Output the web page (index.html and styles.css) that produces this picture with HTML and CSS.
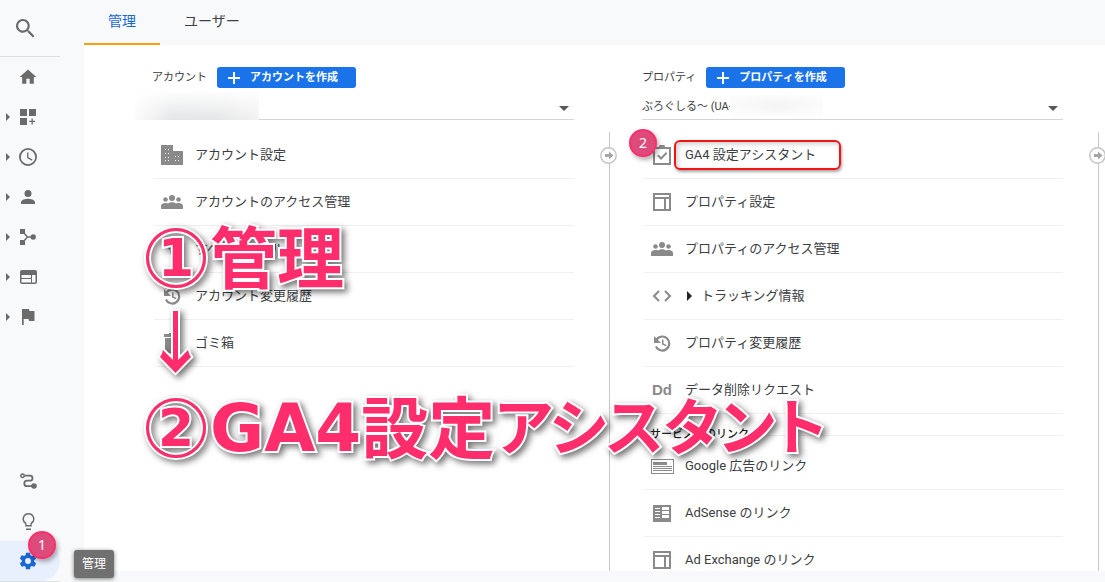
FILE: index.html
```html
<!DOCTYPE html>
<html lang="ja">
<head>
<meta charset="utf-8">
<meta name="viewport" content="width=device-width, initial-scale=1">
<title>管理</title>
<link rel="stylesheet" href="styles.css">
</head>
<body>
<svg class="sprite" aria-hidden="true">
  <symbol id="i-people" viewBox="0 0 22 14"><circle cx="11" cy="3" r="3"/><circle cx="4.500" cy="4.500" r="2.300"/><circle cx="17.500" cy="4.500" r="2.300"/><path d="M0 14v-3c0-2 2-3 4.500-3 1 0 1.800.1 2.500.4C8.200 7.500 9.500 7.200 11 7.200s2.800.3 4 1.200c.7-.3 1.500-.4 2.500-.4 2.500 0 4.500 1 4.500 3v3z"/></symbol>
  <symbol id="i-history" viewBox="0 0 18 17"><path d="M3.500 4.500a7 7 0 1 1-.6 7" fill="none" stroke="#8a8a8a" stroke-width="2.200"/><path d="M1 1v7h7zM9 4.500h1.500v4l3 1.500-.7 1.300L9 9.500z"/></symbol>
  <symbol id="i-layout" viewBox="0 0 18 18"><path fill-rule="evenodd" d="M0 0h18v18H0zM2 2v2h14V2zM2 6v10h9V6zM13 6v10h3V6z"/></symbol>
  <symbol id="i-move" viewBox="0 0 17 17"><circle cx="8.500" cy="8.500" r="7.700" fill="#fff" stroke="#c4c4c4" stroke-width="1.400"/><path fill="#a5a5a5" d="M5 7h4V4.500l4.500 4-4.500 4V10H5z"/></symbol>
  <symbol id="i-plus" viewBox="0 0 14 14"><path d="M6 1h2v5h5v2H8v5H6V8H1V6h5z"/></symbol>
</svg>

<div class="app">
  <nav class="rail" aria-label="メイン">
    <button class="rail-search" aria-label="検索"><svg width="19" height="19" viewBox="3 3 18 18"><path d="M15.500 14h-.79l-.28-.27A6.500 6.500 0 1 0 13.730 14.430l.27.28v.79l5 4.990L20.490 19zM9.500 14a4.500 4.500 0 1 1 0-9 4.500 4.500 0 0 1 0 9z"/></svg></button>
    <button class="rail-item" aria-label="ホーム"><svg width="20" height="20" viewBox="0 0 24 24"><path d="M10 20v-6h4v6h5v-8h3L12 3 2 12h3v8z"/></svg></button>
    <button class="rail-item more" aria-label="カスタマイズ"><svg width="16" height="16" viewBox="0 0 16 16"><path d="M0 0h7v7H0zM9 0h7v7H9zM0 9h7v7H0zM11.500 9.500h1.300v2.300H15v1.300h-2.200v2.300h-1.300v-2.300H9.300v-1.300h2.200z"/></svg></button>
    <button class="rail-item more" aria-label="リアルタイム"><svg width="18" height="18" viewBox="2 2 20 20"><path d="M12 2a10 10 0 1 0 0 20 10 10 0 0 0 0-20zm0 18a8 8 0 1 1 0-16 8 8 0 0 1 0 16zm.5-13H11v6l5.200 3.200.8-1.300-4.500-2.700z"/></svg></button>
    <button class="rail-item more" aria-label="ユーザー"><svg width="14" height="14" viewBox="4 4 16 16"><path d="M12 12a4 4 0 1 0 0-8 4 4 0 0 0 0 8zm0 2c-2.700 0-8 1.300-8 4v2h16v-2c0-2.700-5.300-4-8-4z"/></svg></button>
    <button class="rail-item more" aria-label="集客"><svg width="16" height="16" viewBox="0 0 16 16"><path d="M0 0h5v5H0zM0 11h5v5H0z"/><circle cx="13.200" cy="8" r="2.700"/><path d="M3 3l4.500 5L3 13M7 8h5" fill="none" stroke="#6b6b6b" stroke-width="1.500"/></svg></button>
    <button class="rail-item more" aria-label="行動"><svg width="17" height="14" viewBox="0 0 17 14"><path fill-rule="evenodd" d="M2 0h13a2 2 0 0 1 2 2v10a2 2 0 0 1-2 2H2a2 2 0 0 1-2-2V2a2 2 0 0 1 2-2zM1.500 5v3H11V5zM1.500 9v3.500H11V9zM12 5v7.500h3.500V5z"/></svg></button>
    <button class="rail-item more" aria-label="コンバージョン"><svg width="14" height="16" viewBox="0 0 14 16"><path d="M8.500 2L8 0H1v16h1.700v-6h4.800l.5 2h5.500V2z"/></svg></button>
    <div class="rail-bottom">
      <button class="rail-item" aria-label="アトリビューション"><svg width="17" height="16" viewBox="0 0 17 16"><g fill="none" stroke="#6b6b6b" stroke-width="1.800"><circle cx="2.500" cy="2.700" r="1.700" stroke-width="1.500"/><path d="M4.500 2.700h5.500a2.500 2.500 0 0 1 0 5H7a2.700 2.700 0 0 0 0 5.400h5"/></g><circle cx="14" cy="13" r="2.800"/></svg></button>
      <button class="rail-item" aria-label="発見"><svg width="13" height="17" viewBox="0 0 13 17"><path fill-rule="evenodd" d="M6.500 0a6 6 0 0 0-3.300 11v2.500h6.600V11A6 6 0 0 0 6.500 0zm0 1.400a4.600 4.600 0 0 1 2 8.700v2h-4v-2a4.600 4.600 0 0 1 2-8.700zM4 15.500h5V17H4z"/></svg></button>
      <button class="rail-item active" aria-label="管理" aria-describedby="tip"><svg width="20" height="20" viewBox="0 0 24 24"><path d="M19.430 12.980c.04-.32.07-.64.07-.98s-.03-.66-.07-.98l2.110-1.650a.5.5 0 0 0 .12-.64l-2-3.460a.5.5 0 0 0-.61-.22l-2.490 1a7.300 7.300 0 0 0-1.690-.98l-.38-2.650A.49.49 0 0 0 14 2h-4a.49.49 0 0 0-.49.420l-.38 2.650c-.61.25-1.170.59-1.690.98l-2.490-1a.49.49 0 0 0-.61.22l-2 3.460a.49.49 0 0 0 .12.640l2.110 1.650c-.04.32-.07.65-.07.98s.03.66.07.98l-2.110 1.650a.5.5 0 0 0-.12.640l2 3.460c.12.220.39.3.61.22l2.490-1c.52.4 1.080.73 1.690.98l.38 2.650c.03.24.24.42.49.42h4c.25 0 .46-.18.49-.42l.38-2.650c.61-.25 1.170-.59 1.690-.98l2.490 1c.23.09.49 0 .61-.22l2-3.460a.5.5 0 0 0-.12-.64zM12 15.500a3.500 3.500 0 1 1 0-7 3.500 3.500 0 0 1 0 7z"/></svg><span class="badge badge-rail">1</span></button>
      <span class="tooltip" id="tip" role="tooltip">管理</span>
    </div>
  </nav>

  <main class="main">
    <div class="tabs" role="tablist">
      <button class="tab selected" role="tab" aria-selected="true">管理</button>
      <button class="tab" role="tab" aria-selected="false">ユーザー</button>
    </div>

    <div class="panel">
      <section class="column account">
        <div class="column-body">
          <div class="column-head"><label for="account">アカウント</label><button class="create"><svg width="14" height="14"><use href="#i-plus"/></svg>アカウントを作成</button></div>
          <div class="picker"><select id="account"><option></option></select><span class="smudge smudge-account"></span></div>
          <ul class="list">
            <li><a href="#"><span class="icon"><svg width="22" height="20" viewBox="0 0 22 20"><path fill-rule="evenodd" d="M0 0h12v6h10v14H0zM4 4v1h1V4zM7 4v1h1V4zM4 8v1h1V8zM7 8v1h1V8zM4 12v1h1v-1zM7 12v1h1v-1zM4 15v1h1v-1zM7 15v1h1v-1zM14 11v1h1v-1zM17 11v1h1v-1zM14 15v1h1v-1zM17 15v1h1v-1z"/></svg></span>アカウント設定</a></li>
            <li><a href="#"><span class="icon"><svg width="22" height="14"><use href="#i-people"/></svg></span>アカウントのアクセス管理</a></li>
            <li><a href="#"><span class="icon"><svg width="18" height="16" viewBox="0 0 18 16"><path d="M0 0h18v2l-7 7v7l-4-3V9L0 2z"/></svg></span>すべてのフィルタ</a></li>
            <li><a href="#"><span class="icon"><svg width="18" height="17"><use href="#i-history"/></svg></span>アカウント変更履歴</a></li>
            <li><a href="#"><span class="icon"><svg width="16" height="20" viewBox="0 0 16 20"><path d="M5 0h6v1h5v3H0V1h5zM1 5h14v15H1z"/></svg></span>ゴミ箱</a></li>
          </ul>
        </div>
        <div class="divider"><button aria-label="アカウント列を移動"><svg width="17" height="17"><use href="#i-move"/></svg></button></div>
      </section>

      <section class="column property">
        <div class="column-body">
          <div class="column-head"><label for="property">プロパティ</label><button class="create"><svg width="14" height="14"><use href="#i-plus"/></svg>プロパティを作成</button></div>
          <div class="picker"><select id="property"><option>ぶろぐしる～ (UA-</option></select><span class="smudge smudge-property"></span></div>
          <ul class="list">
            <li><a href="#"><span class="icon"><svg width="18" height="20" viewBox="0 0 18 20"><path fill-rule="evenodd" d="M0 2h6a3 3 0 0 1 6 0h6v18H0zM2 4v14h14V4zM4 11l1.500-1.500L8 12l5-5 1.300 1.400L8 15z"/></svg><span class="badge badge-row">2</span></span><span class="marked">GA4 設定アシスタント</span></a></li>
            <li><a href="#"><span class="icon"><svg width="18" height="18"><use href="#i-layout"/></svg></span>プロパティ設定</a></li>
            <li><a href="#"><span class="icon"><svg width="22" height="14"><use href="#i-people"/></svg></span>プロパティのアクセス管理</a></li>
            <li><a href="#"><span class="icon"><svg width="20" height="12" viewBox="0 0 20 12"><path d="M7 1L2 6l5 5M13 1l5 5-5 5" fill="none" stroke="#8a8a8a" stroke-width="2"/></svg></span><svg class="expand" width="5" height="10" viewBox="0 0 5 10"><path d="M0 0l5 5-5 5z"/></svg>トラッキング情報</a></li>
            <li><a href="#"><span class="icon"><svg width="18" height="17"><use href="#i-history"/></svg></span>プロパティ変更履歴</a></li>
            <li><a href="#"><span class="icon letters">Dd</span>データ削除リクエスト</a></li>
          </ul>
          <h2 class="group">サービス間のリンク</h2>
          <ul class="list">
            <li><a href="#"><span class="icon"><svg width="23" height="15" viewBox="0 0 23 15"><path fill-rule="evenodd" d="M0 0h23v15H0zM1 1v13h21V1zM2 3h14v3H2zM2 7h19v1H2zM2 9h19v1H2zM2 11h19v1H2z"/></svg></span>Google 広告のリンク</a></li>
            <li><a href="#"><span class="icon"><svg width="18" height="17" viewBox="0 0 18 17"><path fill-rule="evenodd" d="M0 0h18v17H0zM9 2v3h7V2zM9 6v3h7V6zM9 10v3h7v-3zM2 3h5v1H2zM2 6h5v1H2zM2 9h5v1H2zM2 12h5v1H2z"/></svg></span>AdSense のリンク</a></li>
            <li><a href="#"><span class="icon"><svg width="18" height="18"><use href="#i-layout"/></svg></span>Ad Exchange のリンク</a></li>
          </ul>
        </div>
        <div class="divider"><button aria-label="プロパティ列を移動"><svg width="17" height="17"><use href="#i-move"/></svg></button></div>
      </section>
    </div>
  </main>

  <div class="callout">
    <p class="step"><span class="ring">1</span>管理</p>
    <svg class="arrow" width="44" height="76" viewBox="0 0 44 76"><path d="M19 5h5v49l10-10q1 5 3 7L21.500 67 6 51q2-2 3-7l10 10z" fill="#ff2d6b" stroke="#fff" stroke-width="4" paint-order="stroke"/></svg>
    <p class="step"><span class="ring">2</span><span class="latin">GA4</span>設定<span class="kana">アシスタント</span></p>
  </div>
</div>
</body>
</html>
```
FILE: styles.css
```css
* { box-sizing: border-box; }
body {
  margin: 0;
  background: #f8f9fb;
  color: #3c4043;
  font: 13px/20px Roboto, "Noto Sans CJK JP", sans-serif;
}
button {
  margin: 0;
  padding: 0;
  border: 0;
  background: none;
  color: inherit;
  font: inherit;
}
svg { display: block; fill: currentColor; }
ul { margin: 0; padding: 0; list-style: none; }
.sprite { position: absolute; width: 0; height: 0; }

.app {
  position: relative;
  display: flex;
  gap: 24px;
  height: 100vh;
  min-height: 480px;
  overflow: hidden;
}

/* Navigation rail */
.rail {
  display: flex;
  flex-direction: column;
  flex: none;
  width: 60px;
  color: #6b6b6b;
}
.rail-search {
  display: flex;
  align-items: center;
  flex: none;
  height: 57px;
  padding-left: 16px;
  border-bottom: 1px solid #dddfe2;
}
.rail-item {
  position: relative;
  display: flex;
  flex: none;
  align-items: center;
  justify-content: center;
  width: 100%;
  height: 40px;
  padding-right: 4px;
}
.rail-item.more::before {
  content: "";
  position: absolute;
  left: 6px;
  border: 4px solid transparent;
  border-left-color: #6b6b6b;
  border-right-width: 0;
}
.rail-bottom {
  position: relative;
  margin-top: auto;
  border-bottom: 1px solid #dddfe2;
}
.rail-item.active {
  border-radius: 0 20px 20px 0;
  background: #e8f0fe;
  color: #1967d2;
}
.tooltip {
  position: absolute;
  z-index: 3;
  left: 74px;
  bottom: 3px;
  width: 40px;
  border-radius: 3px;
  background: #707070;
  box-shadow: 0 1px 4px rgba(0, 0, 0, .5);
  color: #fff;
  font-size: 12px;
  line-height: 28px;
  text-align: center;
}

/* Tabs */
.main {
  display: flex;
  flex: 1;
  flex-direction: column;
  min-width: 0;
  padding-bottom: 11px;
}
.tabs { display: flex; flex: none; height: 45px; }
.tab {
  padding: 0 24px 2px;
  border-bottom: 2px solid transparent;
  font-size: 14px;
}
.tab.selected { border-color: #f9a00a; color: #1967d2; }

/* Columns */
.panel {
  display: grid;
  grid-template-columns: minmax(0, 526fr) minmax(0, 489fr);
  flex: 1;
  min-height: 0;
  padding-right: 6px;
  overflow: hidden;
  background: #fff;
}
.column { display: flex; min-width: 0; }
.column-body { flex: 1; min-width: 0; padding-top: 22px; }
.account .column-body { padding-left: 68px; }
.property .column-body { padding-left: 32px; }
.divider {
  flex: none;
  width: 1px;
  margin: 87px 0 0 35px;
  background: #c8c8c8;
}
.divider button {
  position: relative;
  display: block;
  margin: 15px 0 0 -9px;
}
.column-head {
  display: flex;
  align-items: center;
  gap: 10px;
  font-size: 11px;
}
.create {
  display: flex;
  align-items: center;
  gap: 9px;
  height: 21px;
  padding: 0 18px 0 10px;
  border-radius: 3px;
  background: #1a73e8;
  color: #fff;
  font-weight: 700;
}
.picker { position: relative; margin-top: 5px; }
.picker::after {
  content: "";
  position: absolute;
  top: 13px;
  right: 5px;
  border: 5px solid transparent;
  border-top-color: #55585c;
  border-bottom-width: 0;
}
.picker select {
  display: block;
  width: 100%;
  height: 27px;
  padding: 2px 0 0;
  border: 0;
  border-bottom: 1px solid #d5d5d5;
  border-radius: 0;
  appearance: none;
  background: none;
  color: inherit;
  font: inherit;
  font-size: 11px;
}
.smudge { position: absolute; }
.smudge-account {
  left: -17px;
  bottom: 0;
  width: 124px;
  height: 30px;
  background: linear-gradient(#fff, rgba(255, 255, 255, 0)), linear-gradient(90deg, #fbfbfb, #f0f0f1 16%, #e3e5e7 30%, #e5e6e7 65%, #f2f2f2);
}
.smudge-property {
  left: 88px;
  top: 2px;
  width: 93px;
  height: 21px;
  background: radial-gradient(#f4f4f4, #fcfcfc 75%);
}

/* Setting rows */
.list { margin: 12px 0 0 2px; }
.list a {
  display: flex;
  align-items: center;
  height: 47px;
  border-bottom: 1px solid #f0f0f0;
  color: inherit;
  text-decoration: none;
}
.icon {
  position: relative;
  display: flex;
  flex: none;
  justify-content: center;
  width: 36px;
  margin-right: 5px;
  color: #8a8a8a;
}
.letters { font: 700 15px/20px "Liberation Sans", sans-serif; }
.expand { margin: 0 9px 0 2px; color: #222; }
.group {
  display: flex;
  align-items: center;
  gap: 4px;
  margin: 11px 0 0 8px;
  color: #222;
  font-size: 11px;
  font-weight: 500;
  line-height: 20px;
}
.group::after {
  content: "";
  flex: 1;
  height: 1px;
  background: #f0f0f0;
}
.group + .list { margin-top: -2px; }

/* Annotations */
.badge {
  position: absolute;
  z-index: 2;
  width: 28px;
  height: 28px;
  border: 2px solid #fb2f6e;
  border-radius: 50%;
  background: #dd4b7b;
  box-shadow: 2px 3px 4px rgba(0, 0, 0, .3);
  color: #fff;
  font: 14px/23px "Noto Sans", sans-serif;
  text-align: center;
}
.badge-rail { left: 28px; top: -10px; }
.badge-row { left: -15px; top: -16px; }
.marked {
  margin-left: -11px;
  padding: 3px 23px 3px 9px;
  border: 2px solid #f01414;
  border-radius: 6px;
  box-shadow: 1px 2px 3px rgba(0, 0, 0, .35), inset 2px 2px 5px rgba(0, 0, 0, .2);
}
.callout {
  position: absolute;
  z-index: 1;
  left: 146px;
  top: 220px;
  color: #ff2d6b;
  filter: drop-shadow(3px 3px 3px rgba(0, 0, 0, .55));
  pointer-events: none;
}
.step {
  display: flex;
  align-items: flex-start;
  height: 76px;
  margin: 0;
  font: 700 67px/68px "Noto Sans CJK JP", sans-serif;
  white-space: nowrap;
  -webkit-text-stroke: 4px #fff;
  paint-order: stroke fill;
}
.ring {
  align-self: center;
  width: 60px;
  height: 60px;
  margin-right: 4px;
  border: 3px solid #ff2d6b;
  border-radius: 50%;
  box-shadow: 0 0 0 2px #fff, inset 0 0 0 2px #fff;
  font: 700 52px/54px "DejaVu Sans", sans-serif;
  text-align: center;
}
.latin { font: 700 66px/78px "DejaVu Sans", sans-serif; }
.kana { font-size: 61px; font-feature-settings: "palt"; }
.arrow { margin: 10px 0 8px 8px; }
```
